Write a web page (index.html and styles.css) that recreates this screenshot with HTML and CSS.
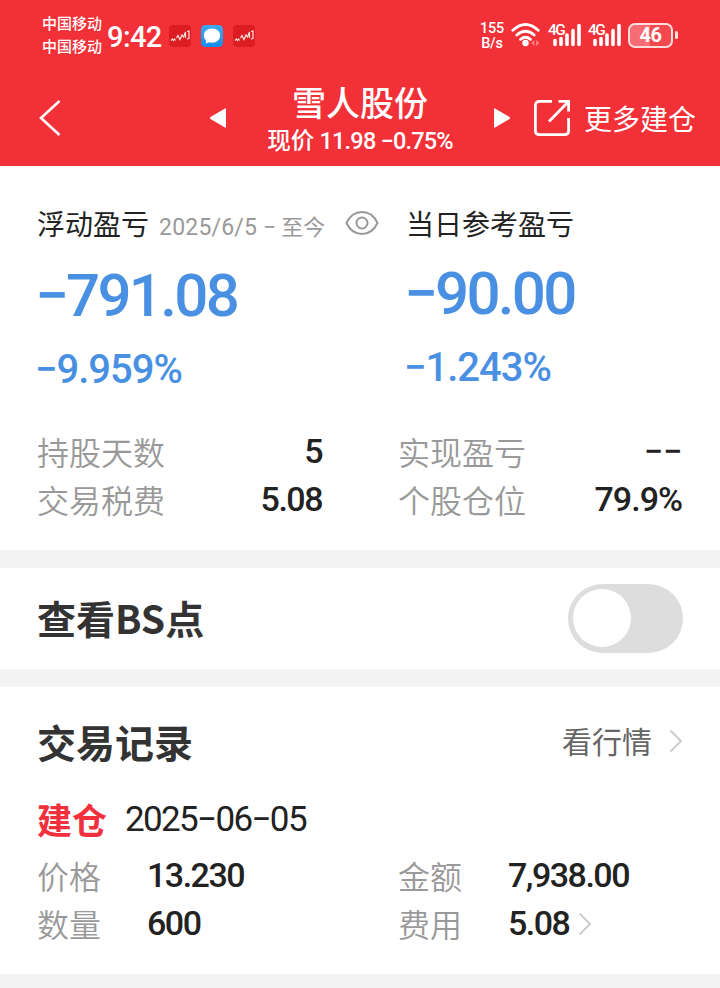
FILE: index.html
```html
<!DOCTYPE html>
<html lang="zh-CN">
<head>
<meta charset="utf-8">
<title>雪人股份</title>
<link rel="stylesheet" href="styles.css">
</head>
<body>
<header class="header">
  <div class="status">
    <div class="carriers"><span>中国移动</span><span>中国移动</span></div>
    <span class="clock">9:42</span>
    <div class="apps">
      <svg class="app" viewBox="0 0 22 22"><rect width="22" height="22" rx="4" fill="#dc1e24"/><path d="M2 15.500l1.500-1.500 1 1.500 1-1.500 1 1.500M7.500 13l1.500-2.500 2 4 2-4.500 1.500 2 2-5v6M18 6.500l2-.5v7.500l-2 .5" fill="none" stroke="#ffe4dc" stroke-width="1.200"/></svg>
      <svg class="app" viewBox="0 0 22 22"><defs><linearGradient id="g" x2="0" y2="1"><stop stop-color="#42a9f5"/><stop offset="1" stop-color="#168cec"/></linearGradient></defs><rect width="22" height="22" rx="4.500" fill="url(#g)"/><path d="M11 3.500c4.800 0 8.200 3 8.200 7s-3.400 7.200-8.200 7.200c-1 0-2-.1-2.900-.4L4.500 18.500l.8-3C3.700 14.200 2.900 12.500 2.900 10.500c0-4 3.300-7 8.100-7z" fill="#fff"/></svg>
      <svg class="app" viewBox="0 0 22 22"><rect width="22" height="22" rx="4" fill="#dc1e24"/><path d="M2 15.500l1.500-1.500 1 1.500 1-1.500 1 1.500M7.500 13l1.500-2.500 2 4 2-4.500 1.500 2 2-5v6M18 6.500l2-.5v7.500l-2 .5" fill="none" stroke="#ffe4dc" stroke-width="1.200"/></svg>
    </div>
    <div class="rate"><span>155</span><span>B/s</span></div>
    <svg class="wifi" viewBox="0 0 30 26"><g fill="none" stroke="#fff" stroke-width="2.800" stroke-linecap="round"><path d="M1.800 8.300q12.700-11.500 25.400 0"/><path d="M5.800 13q8.700-7.500 17.400 0"/><path d="M9.500 17.300q5-4 10 0"/></g><circle cx="14.500" cy="21" r="3.200" fill="#fff"/><path d="M20 21l3.500-3v6zM28.500 21L25 18v6z" fill="#f87c81"/></svg>
    <div class="signal"><span class="net">4G</span><svg class="bars" viewBox="0 0 34 26"><path d="M7 18.500v4M13 16.500v6M19 13v9.500M25 8.500v14M31 3.500v19" fill="none" stroke="#fff" stroke-width="3.600" stroke-linecap="round"/></svg></div>
    <div class="signal"><span class="net">4G</span><svg class="bars" viewBox="0 0 34 26"><path d="M7 18.500v4M13 16.500v6M19 13v9.500M25 8.500v14M31 3.500v19" fill="none" stroke="#fff" stroke-width="3.600" stroke-linecap="round"/></svg></div>
    <div class="battery">46</div>
    <i class="tip"></i>
  </div>
  <nav class="nav">
    <svg class="back" viewBox="0 0 22 36"><path d="M20.500 1L2 18l18.500 17" fill="none" stroke="#fff" stroke-width="2.600"/></svg>
    <svg class="tri left" viewBox="0 0 16 20"><path d="M16 1v18q0 1-1 .6L.5 11q-1-1 0-2L15 .4q1-.4 1 .6z" fill="#fff"/></svg>
    <div class="stock"><h1>雪人股份</h1><p>现价 <span class="num">11.98 −0.75%</span></p></div>
    <svg class="tri right" viewBox="0 0 16 20"><path d="M0 1v18q0 1 1 .6L15.500 11q1-1 0-2L1 .4Q0 0 0 1z" fill="#fff"/></svg>
    <svg class="share" viewBox="0 0 38 38"><g fill="none" stroke="#fff" stroke-width="2.800"><path d="M19 2.400H6.500Q2.400 2.400 2.400 6.500v25q0 4.100 4.100 4.100h25q4.100 0 4.100-4.100V19"/><path d="M16 22.500L35 3M25.500 2.400h10.100v10"/></g></svg>
    <span class="more">更多建仓</span>
  </nav>
</header>
<main>
  <section class="summary">
    <div class="profits">
      <div class="total">
        <div class="caption"><span>浮动盈亏</span><span class="range"><span class="num">2025/6/5 −</span> 至今</span>
          <svg class="eye" viewBox="0 0 34 26"><g fill="none" stroke="#999" stroke-width="2"><path d="M1.500 13C5 5.500 10.500 2 17 2s12 3.500 15.500 11C29 20.500 23.500 24 17 24S5 20.500 1.500 13z"/><circle cx="17" cy="13" r="5.500"/></g></svg>
        </div>
        <div class="amount num">−791.08</div>
        <div class="percent num">−9.959%</div>
      </div>
      <div class="daily">
        <div class="caption">当日参考盈亏</div>
        <div class="amount num">−90.00</div>
        <div class="percent num">−1.243%</div>
      </div>
    </div>
    <dl class="stats">
      <div><dt>持股天数</dt><dd class="num">5</dd></div>
      <div><dt>实现盈亏</dt><dd class="num none">−−</dd></div>
      <div><dt>交易税费</dt><dd class="num">5.08</dd></div>
      <div><dt>个股仓位</dt><dd class="num rate-value">79.9%</dd></div>
    </dl>
  </section>
  <section class="points"><h2>查看BS点</h2><span class="toggle"></span></section>
  <section class="records">
    <div class="heading"><h2>交易记录</h2><span class="quote">看行情</span><svg class="chevron" viewBox="0 0 14 24"><path d="M1.500 1.500L12 12 1.500 22.500" fill="none" stroke="#ccc" stroke-width="2"/></svg></div>
    <div class="event"><strong>建仓</strong><span class="num date">2025−06−05</span></div>
    <dl class="details">
      <div><dt>价格</dt><dd class="num">13.230</dd></div>
      <div><dt>金额</dt><dd class="num">7,938.00</dd></div>
      <div><dt>数量</dt><dd class="num">600</dd></div>
      <div><dt>费用</dt><dd class="num">5.08</dd><svg class="chevron" viewBox="0 0 14 24"><path d="M1.500 1.500L12 12 1.500 22.500" fill="none" stroke="#ccc" stroke-width="2"/></svg></div>
    </dl>
  </section>
</main>
</body>
</html>
```
FILE: styles.css
```css
* { box-sizing: border-box; margin: 0; padding: 0; }
body { width: 720px; height: 988px; overflow: hidden; background: #f4f4f4; font-family: "Noto Sans CJK SC", sans-serif; color: #222; white-space: nowrap; }
svg { display: block; flex: none; }
.num { font-family: Roboto, "Noto Sans CJK SC", sans-serif; font-weight: 500; }

.header { height: 166px; background: #f23038; color: #fff; }
.status { display: flex; align-items: center; height: 72px; padding-left: 42px; }
.carriers { display: flex; flex-direction: column; width: 61px; font-size: 15px; line-height: 23px; font-weight: 500; margin-top: -5px; }
.clock { width: 66px; padding-left: 4px; font: 500 29px/40px Roboto, sans-serif; letter-spacing: -.6px; margin-top: 2px; }
.apps { display: flex; gap: 10px; width: 310px; }
.app { width: 22px; height: 22px; }
.rate { display: flex; flex-direction: column; align-items: center; width: 26px; font: 500 14.500px/15px Roboto, sans-serif; letter-spacing: -.2px; }
.wifi { width: 30px; height: 26px; margin-left: 6px; margin-top: -2px; }
.signal { position: relative; width: 34px; height: 26px; margin-left: 6px; margin-top: -2px; }
.wifi + .signal { margin-left: 7px; }
.bars { width: 34px; height: 26px; }
.net { position: absolute; left: 0; top: 1px; font: 500 15.500px/14px Roboto, sans-serif; letter-spacing: -1.500px; }
.battery { width: 45px; height: 25px; margin-left: 6px; border: 2px solid #fdd; border-radius: 7px; background: linear-gradient(90deg, #f76d73 50%, #f4484f 50%); font: 700 20px/21px Roboto, sans-serif; letter-spacing: -.5px; text-align: center; margin-top: -2px; }
.tip { width: 3px; height: 8px; border-radius: 2px; background: #fdd; margin: -2px 0 0 2px; }

.nav { display: flex; align-items: center; height: 94px; padding: 0 0 2px 39px; }
.back { width: 22px; height: 36px; }
.tri { width: 16px; height: 20px; }
.left { margin-left: 149px; }
.stock { width: 268px; text-align: center; padding-top: 3px; }
.stock h1 { font-size: 34px; line-height: 40px; font-weight: 500; }
.stock p { font-size: 23.500px; line-height: 34px; font-weight: 500; }
.stock .num { font-size: 23.500px; letter-spacing: -.8px; }
.share { width: 38px; height: 38px; margin-left: 23px; }
.more { margin-left: 13px; font-size: 28px; line-height: 40px; }

.summary { height: 384px; background: #fff; padding: 36px 38px 0 37px; }
.profits { display: grid; grid-template-columns: 369px 1fr; height: 226px; }
.caption { display: flex; align-items: center; height: 42px; font-size: 28px; }
.range { margin-left: 10px; font-size: 22px; color: #999; width: 186px; padding-top: 4px; }
.range .num { font-size: 23px; font-weight: 400; letter-spacing: .2px; }
.eye { width: 34px; height: 26px; }
.amount { font-size: 60px; line-height: 80px; margin: 12px 0 0 -2px; color: #4a90e2; letter-spacing: -2.700px; }
.percent { font-size: 40px; line-height: 50px; margin: 9px 0 0 -2px; color: #4a90e2; letter-spacing: -1px; }
.daily .amount { margin-top: 10px; }
.stats { display: grid; grid-template-columns: 285px 284px; column-gap: 76px; }
.stats div { display: flex; justify-content: space-between; align-items: center; height: 48px; }
dt { font-size: 32px; font-weight: 350; color: #999; margin-top: -2px; }
dd { font-size: 34px; line-height: 44px; margin-top: -3px; letter-spacing: -1.500px; }
.rate-value { letter-spacing: -1px; }
.none { letter-spacing: 0; }

.points { display: flex; align-items: center; justify-content: space-between; height: 101px; margin-top: 18px; padding: 0 37px; background: #fff; }
h2 { font-size: 39px; line-height: 56px; font-weight: 700; color: #333; margin-top: -3px; }
.toggle { width: 115px; height: 69px; padding: 5px 5px 6px; border-radius: 35px; background: #ddd; }
.toggle::before { content: ""; display: block; width: 58px; height: 58px; border-radius: 50%; background: #fff; }

.records { height: 287px; margin-top: 18px; padding: 26px 37px 0; background: #fff; }
.heading { display: flex; align-items: center; height: 56px; }
.heading h2 { margin-top: -1px; }
.quote { margin-left: auto; font-size: 30px; color: #666; margin-top: -3px; }
.chevron { width: 14px; height: 24px; margin-left: 17px; }
.event { display: flex; align-items: center; height: 62px; margin-top: 19px; }
.event strong { font-size: 35px; color: #f0303c; margin-top: -2px; }
.date { font-size: 35px; margin-left: 18px; letter-spacing: -1.650px; font-weight: 400; }
.details { display: grid; grid-template-columns: 361px 1fr; margin-top: 2px; }
.details div { display: flex; align-items: center; height: 48px; }
.details dt { width: 110px; }
.details .chevron { margin-left: 9px; }
```
